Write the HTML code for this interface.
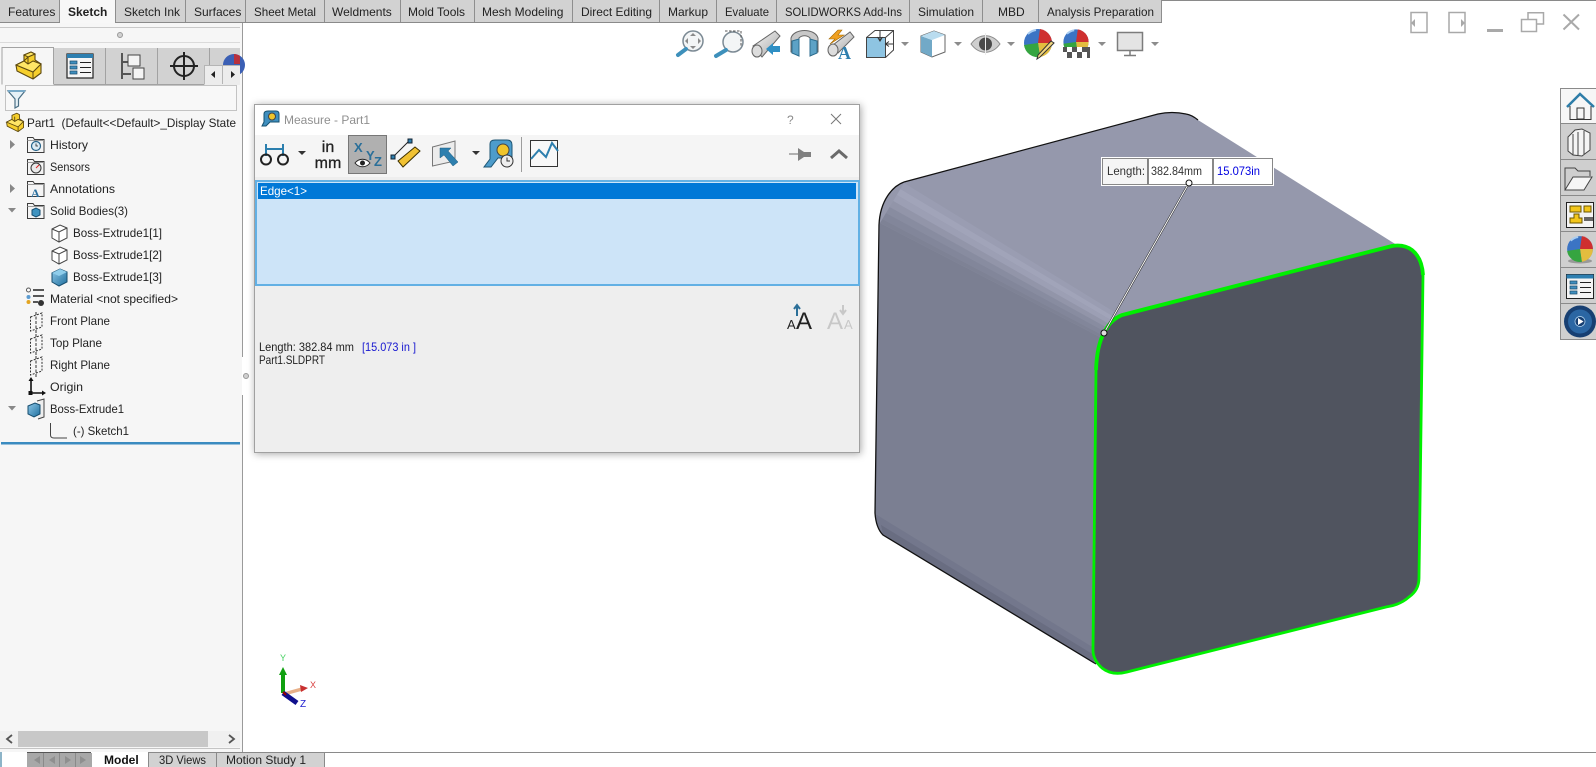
<!DOCTYPE html>
<html><head><meta charset="utf-8"><title>Measure - Part1</title>
<style>
html,body{margin:0;padding:0;background:#fff;width:1596px;height:767px;overflow:hidden}
svg{display:block}
text{font-family:"Liberation Sans",sans-serif;font-size:12px;fill:#222}
</style></head><body>
<svg width="1596" height="767" viewBox="0 0 1596 767" xmlns="http://www.w3.org/2000/svg">
<defs>
<linearGradient id="blueg" x1="0" y1="0" x2="1" y2="1"><stop offset="0" stop-color="#8fc8e8"/><stop offset="1" stop-color="#1f6f9e"/></linearGradient>
<linearGradient id="gold" x1="0" y1="0" x2="1" y2="1"><stop offset="0" stop-color="#ffe45c"/><stop offset="1" stop-color="#e0a800"/></linearGradient>
<linearGradient id="glass" x1="0" y1="0" x2="1" y2="1"><stop offset="0" stop-color="#f8f8f8"/><stop offset="1" stop-color="#a8a8a8"/></linearGradient>
<g id="folder"><path d="M.5 16.5V1.5H6l1.500 2H17V16.500Z" fill="#f4f4f4" stroke="#3c3c3c"/><path d="M.5 4.500H17" stroke="#9a9a9a"/></g>
<g id="plane"><path d="M.5 5 12 1V15L.5 19Z" fill="none" stroke="#333" stroke-dasharray="2 1.400"/><path d="M6 0V21" stroke="#333" stroke-dasharray="3 1.500"/></g>
<g id="cube"><path d="M1 5 9 1 16 4V14L8 18 1 14Z" fill="#fff" stroke="#444"/><path d="M1 5 8 8 16 4M8 8V18" fill="none" stroke="#444"/></g>
<g id="ball">
<circle r="14" fill="#3b74c4"/>
<path d="M0 0 2-14A14 14 0 0 1 14 0Z" fill="#cf2f2f"/>
<path d="M0 0H14A14 14 0 0 1 2 14Z" fill="#e3bd3f"/>
<path d="M0 0 2 14A14 14 0 0 1-14 2Z" fill="#35a540"/>
<path d="M-10-9A14 14 0 0 1-2-13" stroke="#a8cdf2" stroke-width="2" fill="none"/>
</g>
<path id="dd" d="M-4-2H4L0 2Z" fill="#8c8c8c"/>
</defs>

<!-- top chrome -->
<rect x="0" y="0" width="1596" height="1" fill="#8a8a8a"/>
<rect x="0" y="0" width="1162" height="22" fill="#d2d2d2"/>
<rect x="60" y="0" width="55" height="23" fill="#f7f7f7"/>
<path d="M0 22.500H60M115 22.500H1162" stroke="#8a8a8a"/>
<path d="M59.500 0V22M115.500 0V22M185.500 0V22M245.500 0V22M324.500 0V22M400.500 0V22M474.500 0V22M572.500 0V22M659.500 0V22M716.500 0V22M776.500 0V22M909.500 0V22M982.500 0V22M1038.500 0V22M1161.500 0V22" stroke="#8e8e8e"/>
<text x="8" y="16">Features</text><text x="68" y="16" style="font-weight:700">Sketch</text><text x="124" y="16">Sketch Ink</text><text x="194" y="16">Surfaces</text><text x="254" y="16" textLength="62" lengthAdjust="spacingAndGlyphs">Sheet Metal</text><text x="332" y="16">Weldments</text><text x="408" y="16" textLength="57" lengthAdjust="spacingAndGlyphs">Mold Tools</text><text x="482" y="16">Mesh Modeling</text><text x="581" y="16" textLength="71" lengthAdjust="spacingAndGlyphs">Direct Editing</text><text x="668" y="16">Markup</text><text x="725" y="16" textLength="44" lengthAdjust="spacingAndGlyphs">Evaluate</text><text x="785" y="16" textLength="117" lengthAdjust="spacingAndGlyphs">SOLIDWORKS Add-Ins</text><text x="918" y="16">Simulation</text><text x="998" y="16">MBD</text><text x="1047" y="16" textLength="107" lengthAdjust="spacingAndGlyphs">Analysis Preparation</text>

<!-- window controls -->
<g fill="none" stroke="#a9a9a9" stroke-width="1.500">
<rect x="1411" y="12.500" width="16" height="20"/><rect x="1449" y="12.500" width="16" height="20"/>
<rect x="1521.500" y="19.500" width="15" height="12"/><path d="M1528 19V12.700H1543.500V24H1537"/>
<path d="M1563.500 14.500 1579 29.500M1579 14.500 1563.500 29.500" stroke-width="2"/>
</g>
<path d="M1411 23 1415 19V27ZM1465 23 1461 19V27Z" fill="#a9a9a9"/>
<rect x="1487" y="29" width="16" height="3" fill="#a9a9a9"/>

<!-- left panel -->
<rect x="0" y="23" width="242" height="729" fill="#f6f6f6"/>
<path d="M242.500 23V357M242.500 395V752" stroke="#9a9a9a"/>
<path d="M0 27.500H240" stroke="#c9c9c9"/>
<circle cx="120" cy="35" r="2.500" fill="#d0d0d0" stroke="#999"/>
<circle cx="246" cy="376" r="2.500" fill="#d0d0d0" stroke="#999"/>
<path d="M0 42.500H240" stroke="#dadada"/>
<!-- tabs -->
<rect x="54" y="48" width="186" height="36" fill="#d2d2d2"/>
<path d="M2 84.500V47.500H53.500V84.500M105.500 48V84M157.500 48V84M209.500 48V84" fill="none" stroke="#a2a2a2"/>
<path d="M54 84.500H240" stroke="#a2a2a2"/>
<!-- feature tree tab icon -->
<path d="M16 65 24 61V55L31 52 35 54V60L41 64V73L33 79 17 71Z" fill="#f6cf2c" stroke="#5e4a10" stroke-width="1.100" stroke-linejoin="round"/>
<path d="M16 65 33 72 41 64 33 61 28 64 24 61 28 57 35 54M28 57V64M33 72V79" fill="none" stroke="#5e4a10"/>
<path d="M16 65 24 61 28 64 33 61 41 64 33 72Z" fill="#ffe666" stroke="#5e4a10"/>
<path d="M24 55 31 52 35 54 28 57Z" fill="#ffe666" stroke="#5e4a10"/>
<!-- property tab icon -->
<rect x="67" y="54" width="26" height="24" fill="#f6f6f6" stroke="#222" stroke-width="1.200"/><rect x="67" y="54" width="26" height="4" fill="#2d7fb0"/>
<path d="M70 61h7v3h-7zM70 66h7v3h-7zM70 71h7v3h-7z" fill="#3f8fbf" stroke="#1c4d6c" stroke-width=".7"/>
<path d="M80 62.500h11M80 67.500h11M80 72.500h11" stroke="#222"/>
<!-- config tab icon -->
<path d="M122 53V79M122 62H131M122 74H131" stroke="#555" stroke-width="2" fill="none"/>
<rect x="128" y="55" width="12" height="11" fill="#f4f4f4" stroke="#444"/><rect x="133" y="68" width="11" height="11" fill="#f4f4f4" stroke="#444"/>
<!-- dim tab icon -->
<circle cx="184" cy="66" r="10" fill="none" stroke="#222" stroke-width="2"/><path d="M170 66H198M184 52V80" stroke="#222" stroke-width="2"/>
<!-- appearance ball tab -->
<circle cx="234" cy="65" r="11" fill="#3b5fb4"/><path d="M234 54A11 11 0 0 1 240 56V64H234Z" fill="#b8303c"/>
<rect x="204" y="65" width="36" height="20" fill="#ececec"/>
<path d="M204.500 84.500V65.500H240M222.500 66V84" fill="none" stroke="#b5b5b5"/>
<path d="M211 74.500 215 71V78ZM235 74.500 231 71V78Z" fill="#222"/>
<!-- filter box -->
<rect x="5.500" y="85.500" width="231" height="25" fill="#f8f8f8" stroke="#c3c3c3"/>
<path d="M8 91H25L18.500 99V106L15 108V99Z" fill="#e6f1f7" stroke="#4a6f85" stroke-width="1.200"/><path d="M8 91H25" stroke="#79aac8" stroke-width="2"/>
<!-- part row -->
<g transform="translate(4.500 82) scale(.68)">
<path d="M3 59 11 55V49L18 46 22 48V54L28 58V67L20 73 4 65Z" fill="#f6cf2c" stroke="#5e4a10" stroke-width="1.300"/>
<path d="M3 59 11 55 15 58 20 55 28 58 20 66Z" fill="#ffe666" stroke="#5e4a10" stroke-width="1.300"/>
<path d="M20 66V73M15 51V58" stroke="#5e4a10" stroke-width="1.300"/>
</g>
<text x="27" y="127" textLength="209" lengthAdjust="spacingAndGlyphs">Part1&#160;&#160;(Default&lt;&lt;Default&gt;_Display State</text>
<!-- arrows -->
<path d="M10 140 15 144.500 10 149ZM10 184 15 188.500 10 193Z" fill="#888"/>
<path d="M8 208H16L12 212.500ZM8 406H16L12 410.500Z" fill="#888"/>
<!-- tree icons -->
<use href="#folder" x="27" y="136"/><circle cx="36" cy="146" r="4.500" fill="#dcecf5" stroke="#27648a" stroke-width="1.200"/><path d="M36 143.500V146H38" stroke="#222" fill="none" stroke-width=".8"/>
<use href="#folder" x="27" y="158"/><circle cx="36" cy="168" r="5" fill="#e8e8e8" stroke="#333"/><path d="M36 168 39 165" stroke="#d22"/>
<use href="#folder" x="27" y="180"/><text x="31" y="197" style="font:700 12px 'Liberation Serif',serif;fill:#2a6f9e">A</text>
<use href="#folder" x="27" y="202"/><path d="M32 210 36 208 40 210V215L36 217 32 215Z" fill="#3f93c0" stroke="#144d70"/>
<use href="#cube" x="51" y="224"/><use href="#cube" x="51" y="246"/>
<g transform="translate(51 268)"><path d="M1 5 9 1 16 4V14L8 18 1 14Z" fill="url(#blueg)" stroke="#174d6e"/><path d="M1 5 9 1 16 4 8 8Z" fill="#8fcdeb"/></g>
<circle cx="28.500" cy="290" r="2" fill="#fff" stroke="#555"/><circle cx="28.500" cy="297" r="2" fill="#5b9bd0"/><circle cx="28.500" cy="302" r="2" fill="#e3a420"/>
<path d="M33 290H44M33 296H44M33 302H38" stroke="#222" stroke-width="1.500"/><circle cx="41" cy="303" r="3" fill="#333"/>
<use href="#plane" x="30" y="312"/><use href="#plane" x="30" y="334"/><use href="#plane" x="30" y="356"/>
<path d="M31 379V393H44" stroke="#111" stroke-width="1.600" fill="none"/><path d="M28.500 381 31 377 33.500 381ZM42 390.500 46 393 42 395.500Z" fill="#111"/><rect x="28.500" y="391" width="4" height="4" fill="#111"/>
<path d="M37 401 44 399V417L38 419" fill="#eee" stroke="#444"/><path d="M28 406 35 403 40 405V414L34 417 28 414Z" fill="url(#blueg)" stroke="#174d6e"/>
<path d="M50.500 423V435Q50.500 438 54 438H67" fill="none" stroke="#444"/>
<text x="50" y="149" textLength="38" lengthAdjust="spacingAndGlyphs">History</text><text x="50" y="171" textLength="40" lengthAdjust="spacingAndGlyphs">Sensors</text><text x="50" y="193" textLength="65" lengthAdjust="spacingAndGlyphs">Annotations</text><text x="50" y="215" textLength="78" lengthAdjust="spacingAndGlyphs">Solid Bodies(3)</text>
<text x="73" y="237" textLength="89" lengthAdjust="spacingAndGlyphs">Boss-Extrude1[1]</text><text x="73" y="259" textLength="89" lengthAdjust="spacingAndGlyphs">Boss-Extrude1[2]</text><text x="73" y="281" textLength="89" lengthAdjust="spacingAndGlyphs">Boss-Extrude1[3]</text>
<text x="50" y="303" textLength="128" lengthAdjust="spacingAndGlyphs">Material &lt;not specified&gt;</text><text x="50" y="325" textLength="60" lengthAdjust="spacingAndGlyphs">Front Plane</text><text x="50" y="347" textLength="52" lengthAdjust="spacingAndGlyphs">Top Plane</text><text x="50" y="369" textLength="60" lengthAdjust="spacingAndGlyphs">Right Plane</text><text x="50" y="391" textLength="33" lengthAdjust="spacingAndGlyphs">Origin</text><text x="50" y="413" textLength="74" lengthAdjust="spacingAndGlyphs">Boss-Extrude1</text><text x="73" y="435" textLength="56" lengthAdjust="spacingAndGlyphs">(-) Sketch1</text>
<rect x="1" y="442" width="239" height="2.500" fill="#3a8bc0"/>
<!-- h scrollbar -->
<rect x="0" y="731" width="240" height="16" fill="#f0f0f0"/><rect x="18" y="731" width="190" height="16" fill="#c8c8c8"/>
<path d="M12 735 7 739 12 743M229 735 234 739 229 743" fill="none" stroke="#555" stroke-width="1.800"/>
<path d="M0 748.500H240" stroke="#c4c4c4"/>
<!-- bottom tabs -->
<rect x="0" y="752" width="1596" height="15" fill="#fff"/>
<rect x="0" y="752" width="2" height="15" fill="#8db4c8"/>
<rect x="27" y="753" width="65" height="14" fill="#a8a8a8"/>
<path d="M43.500 753V767M59.500 753V767M75.500 753V767" stroke="#8a8a8a"/>
<path d="M27 752.500H91" stroke="#555"/>
<path d="M40 756 34 760 40 764ZM55 756 49 760 55 764ZM65 756 71 760 65 764ZM80 756 86 760 80 764Z" fill="#8f8f8f"/>
<rect x="149" y="753" width="175" height="14" fill="#d2d2d2"/>
<path d="M149 752.500H1596M148.500 753V767M216.500 753V767M324.500 753V767" stroke="#8a8a8a" fill="none"/>
<path d="M242 752.500H148" stroke="#8a8a8a"/>
<text x="104" y="764" style="font-weight:700;fill:#111">Model</text><text x="159" y="764" textLength="47" lengthAdjust="spacingAndGlyphs">3D Views</text><text x="226" y="764">Motion Study 1</text>

<!-- view toolbar -->
<g>
<circle cx="693" cy="41" r="10" fill="#f3f5f6" stroke="#7c8a94" stroke-width="1.500"/><path d="M686 49 678 55" stroke="#3e90bb" stroke-width="4" stroke-linecap="round"/>
<path d="M693 33 696 36H690ZM693 49 696 46H690ZM685 41 688 38V44ZM701 41 698 38V44Z" fill="#8a8a8a"/>
<circle cx="733" cy="42" r="10" fill="#f3f5f6" stroke="#7c8a94" stroke-width="1.500"/><path d="M726 50 716 56" stroke="#3e90bb" stroke-width="4" stroke-linecap="round"/>
<path d="M725 31H741V46" fill="none" stroke="#555" stroke-dasharray="2.500 1.500"/>
<path d="M753 46 775 31 780 36 762 57Z" fill="url(#glass)" stroke="#666"/><ellipse cx="757" cy="51" rx="5" ry="6" fill="#ddd" stroke="#666"/>
<path d="M766 49 773 43V46H780V52H773V55Z" fill="#2f8fc4"/>
<path d="M791 38C794 28 815 28 818 38V52L810 56V38C807 35 802 35 799 38V56L791 52Z" fill="#c8c8c8" stroke="#666"/>
<path d="M792 41 799 39V56L792 53ZM810 39 817 41V53L810 56Z" fill="#5da2c6" stroke="#2d6e90"/>
<path d="M838 30 829 39H835L830 44 844 35H838L842 30Z" fill="#f0a020" stroke="#a66a00" stroke-width=".6"/>
<path d="M829 48 850 32 854 37 838 53Z" fill="url(#glass)" stroke="#666"/><ellipse cx="833" cy="50" rx="5" ry="6" fill="#ddd" stroke="#666"/>
<text x="838" y="59" style="font:700 18px 'Liberation Serif',serif;fill:#2f7fae">A</text>
<rect x="866.500" y="37.500" width="19" height="20" fill="#8ec4e2" stroke="#444"/>
<path d="M866.500 37.500 875 30.500H893.500V50L885.500 57.500M885.500 37.500 893.500 30.500" fill="none" stroke="#444"/>
<path d="M880 31V40M877.500 37 880 41 882.500 37M893 44H886M889 41.500 885.500 44 889 46.500" fill="none" stroke="#333"/>
<use href="#dd" x="905" y="44"/>
<path d="M921 36 934 31 945 35V52L932 57 921 52Z" fill="#fff" stroke="#666"/><path d="M921 36 932 40V57L921 52Z" fill="#72a9c7"/><path d="M921 36 934 31 945 35 932 40Z" fill="#b9dcef"/>
<use href="#dd" x="958" y="44"/>
<path d="M971 44C979 33 992 33 1000 44 992 55 979 55 971 44Z" fill="#cfcfcf" stroke="#8c8c8c"/><circle cx="985.500" cy="44" r="6.500" fill="#4a4a4a"/><path d="M985.500 33V55" stroke="#eee" stroke-width="1"/>
<use href="#dd" x="1011" y="44"/>
<use href="#ball" transform="translate(1038 43)"/><path d="M1054 43 1040 57 1037 59 1038 55 1051 41Z" fill="#f1d67e" stroke="#333"/>
<g transform="translate(1076 42) scale(.9)"><use href="#ball"/></g>
<path d="M1063 47H1090V58H1063Z" fill="#555"/><path d="M1067 47h5v5h-5zM1077 47h5v5h-5zM1072 52h5v6h-5zM1082 52h5v6h-5zM1063 52h4v6h-4z" fill="#fff"/>
<use href="#dd" x="1102" y="44"/>
<rect x="1117.500" y="32.500" width="25" height="18" fill="#e4e4e4" stroke="#7c7c7c" stroke-width="1.500"/><path d="M1130 51V55M1124 55.500H1136" stroke="#7c7c7c" stroke-width="1.500"/>
<use href="#dd" x="1155" y="44"/>
</g>

<!-- model -->
<path d="M904 182 1158 114Q1172 111 1186 114 1192 115 1198 120L1400 247 1423 280 1419 578 1386 608 1124 673 1093 663 883 535Q876 528 875 513L879 225C880 200 893 186 904 182Z" fill="#9598ac"/>
<path d="M880 223 1100 337 1096 664 883 535Q876 528 875 513Z" fill="#7b7f92"/>
<path d="M904 183 1116 313 1113.600 316.600 900.400 189Z" fill="#9a9db2"/>
<path d="M900.400 189 1113.600 316.600 1111.200 320.200 896.800 195Z" fill="#a1a4b9"/>
<path d="M896.800 195 1111.200 320.200 1108.800 323.800 893.200 201Z" fill="#9c9fb4"/>
<path d="M893.200 201 1108.800 323.800 1106.400 327.400 889.600 207Z" fill="#9295a9"/>
<path d="M889.600 207 1106.400 327.400 1104 331 886 213Z" fill="#888ca0"/>
<path d="M886 213 1104 331 1101.600 334.600 882.400 219Z" fill="#82869a"/>
<path d="M882.400 219 1101.600 334.600 1100 337 880 223Z" fill="#7e8295"/>
<path d="M877 515 1094 648 1094 663 883 535Q877 528 876 515Z" fill="#70748a" opacity=".75"/>
<path d="M881 525 1094 655 1094 663 883 535Z" fill="#666a7e" opacity=".8"/>
<path d="M904 182 1158 114Q1172 111 1186 114 1192 115 1198 120" fill="none" stroke="#111" stroke-width="1.200"/>
<path d="M904 182C893 186 880 200 879 225L875 513Q876 528 883 535L1096 664" fill="none" stroke="#111" stroke-width="1.300"/>
<path d="M1104 333Q1110 320 1122 315L1392 246Q1404 244 1412 250 1422 258 1423 275L1419 578Q1419 590 1409 597 1400 605 1386 607L1127 672Q1112 676 1102 668 1093 660 1093 650L1096 370Q1097 345 1104 333Z" fill="#50545f" stroke="#00f000" stroke-width="2.800"/>
<path d="M1096 370Q1097 345 1104 333 1110 320 1122 315L1392 246Q1404 244 1412 250 1422 258 1423 275" fill="none" stroke="#00f000" stroke-width="3.800"/>
<path d="M1104 333 1189 183" stroke="#222" stroke-width="2"/><path d="M1104 333 1189 183" stroke="#fff" stroke-width="1"/>
<rect x="1101.500" y="157.500" width="172" height="28" fill="#fff" stroke="#fff"/>
<rect x="1102.500" y="158.500" width="170" height="26" fill="#fff" stroke="#888"/>
<rect x="1103" y="159" width="45" height="25" fill="#f5f5f5"/>
<path d="M1148 159V184M1213 159V184" stroke="#111"/>
<text x="1107" y="175" textLength="38" lengthAdjust="spacingAndGlyphs" style="fill:#333">Length:</text><text x="1151" y="175" textLength="51" lengthAdjust="spacingAndGlyphs" style="fill:#333">382.84mm</text><text x="1217" y="175" textLength="43" lengthAdjust="spacingAndGlyphs" style="fill:#0000e0">15.073in</text>
<circle cx="1189" cy="183" r="3" fill="#fff" stroke="#111"/><circle cx="1104" cy="333" r="3" fill="#ddd" stroke="#111"/>

<!-- triad -->
<path d="M283 693V672" stroke="#10a010" stroke-width="4"/><path d="M279 675 283 667 287 675Z" fill="#10a010"/>
<text x="280" y="661" style="font-size:9px;fill:#44d060">Y</text>
<path d="M284 694 302 689" stroke="#e8b088" stroke-width="3.500"/><path d="M300 685 308 688 301 692Z" fill="#c83030"/>
<text x="310" y="688" style="font-size:9px;fill:#d84040">X</text>
<path d="M283 693 297 703" stroke="#10108c" stroke-width="5"/><path d="M286 695 283 692" stroke="#900" stroke-width="2"/>
<text x="300" y="707" style="font-size:10px;fill:#2020d0">Z</text>

<!-- task pane -->
<rect x="1560.500" y="88.500" width="36" height="251" fill="#cfcfcf" stroke="#8a8a8a"/>
<rect x="1561" y="89" width="35" height="34" fill="#f6f6f6"/>
<path d="M1561 123.500H1596M1561 159.500H1596M1561 195.500H1596M1561 231.500H1596M1561 267.500H1596M1561 303.500H1596" stroke="#8a8a8a"/>
<path d="M1567 107 1580 94 1594 107" fill="none" stroke="#2d7da8" stroke-width="2.500"/>
<path d="M1570 106V119.500H1591V106" fill="#f6f6f6" stroke="#333"/><rect x="1577" y="108" width="7" height="11" fill="#f6f6f6" stroke="#333"/>
<path d="M1568 137 1575 130 1582 129 1590 133V150L1582 156 1573 155 1568 151Z" fill="#f4f4f4" stroke="#444"/>
<path d="M1573 134V155M1578 132V155M1584 131V154" stroke="#444" fill="none"/>
<path d="M1565 190V168H1575L1578 171H1590V176" fill="none" stroke="#444"/><path d="M1565 190 1573 177H1592L1584 190Z" fill="#f6f6f6" stroke="#444"/>
<rect x="1566.500" y="202.500" width="27" height="25" fill="#f4f4f4" stroke="#222"/>
<rect x="1570" y="206" width="11" height="6" fill="#f3c61a" stroke="#6b5600"/><rect x="1584" y="206" width="7" height="6" fill="#f3c61a" stroke="#6b5600"/>
<path d="M1570 223V218H1574V214H1579V218H1582V223Z" fill="#f3c61a" stroke="#6b5600"/><rect x="1584" y="217" width="9" height="4" fill="#666"/>
<ellipse cx="1580" cy="261" rx="12" ry="2.500" fill="#999"/>
<use href="#ball" transform="translate(1580 249) scale(.92)"/>
<rect x="1566.500" y="274.500" width="27" height="24" fill="#f4f4f4" stroke="#222"/><rect x="1566.500" y="274.500" width="27" height="4" fill="#2d7fb0"/>
<path d="M1570 281h7v3h-7zM1570 286h7v3h-7zM1570 291h7v3h-7z" fill="#3f8fbf" stroke="#1c4d6c" stroke-width=".7"/><path d="M1580 282.500h11M1580 287.500h11M1580 292.500h11" stroke="#222"/>
<circle cx="1580" cy="321.500" r="16" fill="#173f72"/><circle cx="1580" cy="321.500" r="12" fill="#2b66a3"/><circle cx="1580" cy="321.500" r="5" fill="#173f72" stroke="#bcdcf4" stroke-width=".7"/><path d="M1578 318 1583.500 321.500 1578 325Z" fill="#fff"/>

<!-- measure dialog -->
<g style="filter:drop-shadow(1px 1px 4px rgba(0,0,0,.35))"><rect x="254.500" y="104.500" width="605" height="348" fill="#eee" stroke="#a0a0a0"/></g>
<rect x="255" y="105" width="604" height="30" fill="#fff"/>
<rect x="255" y="135" width="604" height="42" fill="#f5f5f5"/>
<path d="M264 114Q264 111 268 111H276Q279 111 279 114V122H270L266 126H262L264 122Z" fill="#3f8fbf" stroke="#16506f"/><circle cx="272" cy="116.500" r="3.500" fill="#f0c52b" stroke="#444"/>
<text x="284" y="124" style="fill:#8f8f8f">Measure - Part1</text>
<text x="787" y="124" style="fill:#8a8a8a">?</text>
<path d="M831 114 841 124M841 114 831 124" stroke="#777"/>
<!-- dim -->
<path d="M266 144V156M283 144V156M266 149H283" stroke="#2b7fae" stroke-width="2"/><circle cx="266" cy="159.500" r="5" fill="none" stroke="#222" stroke-width="2"/><circle cx="283" cy="159.500" r="5" fill="none" stroke="#222" stroke-width="2"/>
<path d="M298 151H306L302 155Z" fill="#333"/>
<text x="328" y="152" text-anchor="middle" style="font-size:16px;fill:#222;stroke:#222;stroke-width:.3">in</text><text x="328" y="168" text-anchor="middle" style="font-size:16px;fill:#222;stroke:#222;stroke-width:.3">mm</text>
<rect x="348.500" y="135.500" width="38" height="38" fill="#b0b0b0" stroke="#777"/>
<text x="354" y="152" style="font-size:13px;font-weight:700;fill:#2a6f99">X</text><text x="366" y="160" style="font-size:13px;font-weight:700;fill:#2a6f99">Y</text><text x="374" y="166" style="font-size:13px;font-weight:700;fill:#2a6f99">Z</text>
<path d="M355 163C359 158 366 158 370 163 366 168 359 168 355 163Z" fill="#fff" stroke="#222"/><circle cx="362.500" cy="163" r="2.500" fill="#222"/>
<path d="M393 157 410 140" stroke="#222"/><rect x="391" y="155" width="4" height="4" fill="#2d7fae" stroke="#123"/><rect x="408" y="139" width="4" height="4" fill="#2d7fae" stroke="#123"/>
<path d="M398 161 415 147 420 151 403 167Z" fill="#f1c232" stroke="#3d3000"/>
<path d="M432.500 147 455 141V161L432.500 166Z" fill="#ececec" stroke="#777"/>
<path d="M440 148H451L448 151 458 162 453 166 444 155 440 158Z" fill="#2d7fae" stroke="#1e5a7c" stroke-width=".5"/>
<path d="M472 151H480L476 155Z" fill="#333"/>
<path d="M490 144Q490 140 495 140H507Q512 140 512 145V158H498L491 167H484L490 159Z" fill="#4d9ccb" stroke="#1d5573"/><circle cx="503" cy="150" r="6" fill="#f0c52b" stroke="#444"/><circle cx="507" cy="161" r="6" fill="#eee" stroke="#333"/><path d="M507 157.500V161H510" stroke="#333" fill="none"/>
<path d="M521.500 137V172" stroke="#9c9c9c"/>
<rect x="530.500" y="140.500" width="27" height="26" fill="#f8f8f8" stroke="#333"/><path d="M531 159 539 150 546 157 552 143 558 151" fill="none" stroke="#2d7fae" stroke-width="2"/>
<path d="M789 154H803" stroke="#999" stroke-width="1.500"/><path d="M798 148 804 152H811V157H804L798 161Z" fill="#808080"/>
<path d="M831 158 839 151 847 158" fill="none" stroke="#6a6a6a" stroke-width="3"/>
<!-- list -->
<rect x="256" y="181" width="603" height="104" fill="#cde4f8" stroke="#62b0e4" stroke-width="2"/>
<rect x="258" y="183" width="598" height="16" fill="#0078d7"/>
<text x="260" y="195" textLength="47" lengthAdjust="spacingAndGlyphs" style="fill:#fff">Edge&lt;1&gt;</text>
<!-- AA -->
<text x="787" y="329" style="font-size:13px;fill:#222">A</text><text x="796" y="329" style="font-size:24px;fill:#222">A</text>
<path d="M797 306V316M794 309 797 305 800 309" stroke="#2b6f98" stroke-width="2" fill="none"/>
<text x="827" y="329" style="font-size:24px;fill:#c8c8c8">A</text><text x="844" y="329" style="font-size:13px;fill:#c8c8c8">A</text>
<path d="M843 305V313M840 310 843 314 846 310" stroke="#c8c8c8" stroke-width="2" fill="none"/>
<text x="259" y="351" textLength="95" lengthAdjust="spacingAndGlyphs">Length: 382.84 mm</text><text x="362" y="351" textLength="54" lengthAdjust="spacingAndGlyphs" style="fill:#1818d0">[15.073 in ]</text>
<text x="259" y="364" textLength="66" lengthAdjust="spacingAndGlyphs">Part1.SLDPRT</text>
</svg>
</body></html>
